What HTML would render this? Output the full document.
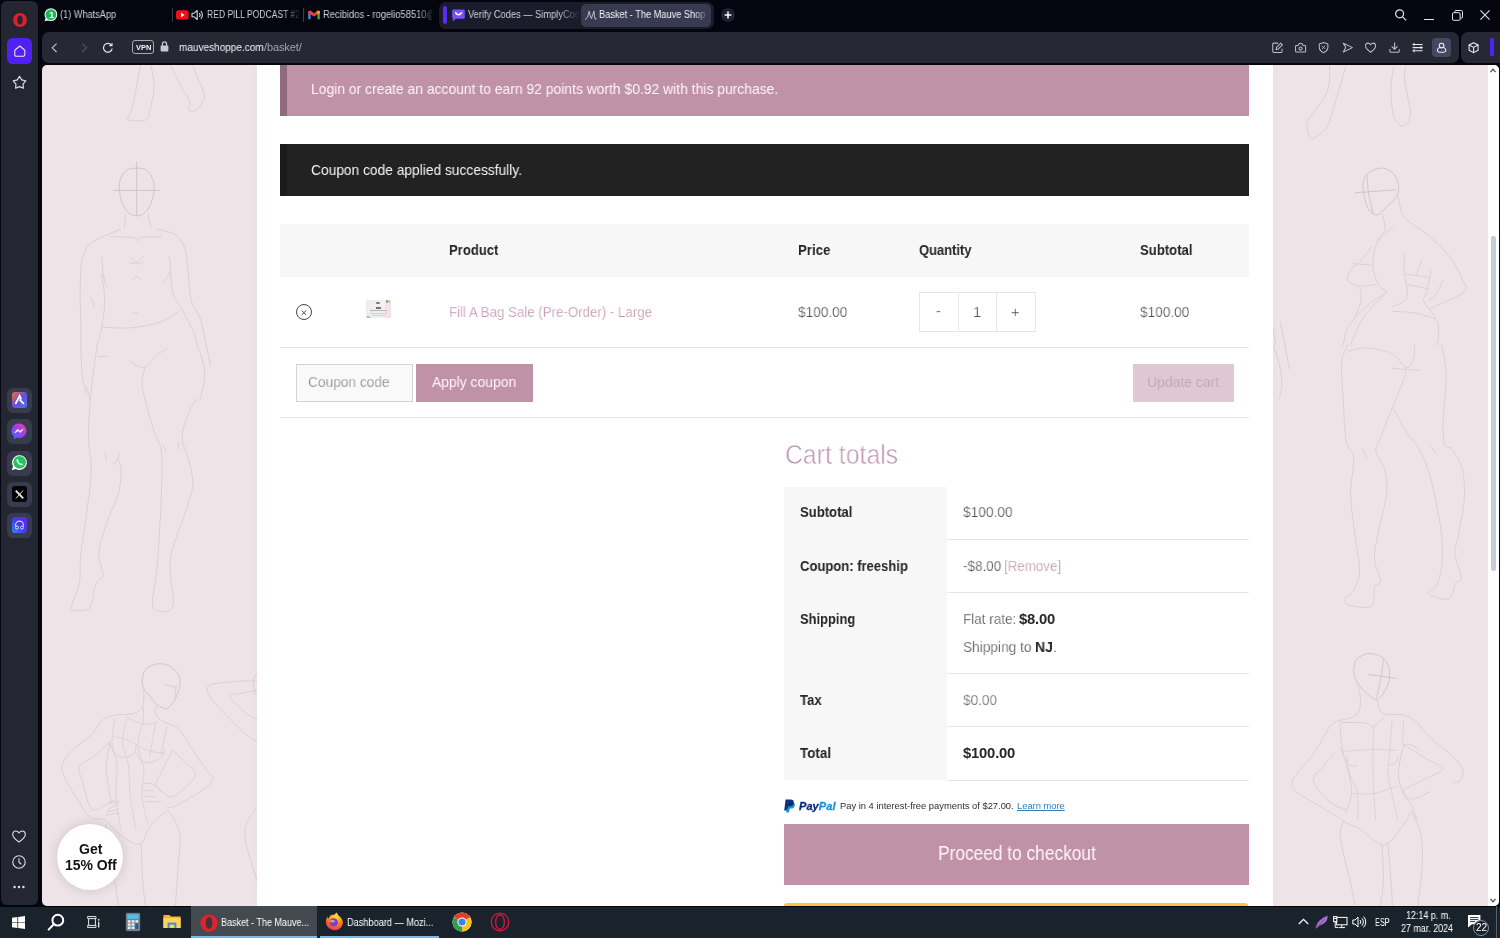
<!DOCTYPE html>
<html lang="en">
<head>
<meta charset="utf-8">
<title>Basket - The Mauve Shoppe</title>
<style>
*{box-sizing:border-box;margin:0;padding:0}
html,body{width:1500px;height:938px;overflow:hidden;background:#04050f}
body{position:relative;font-family:"Liberation Sans",Arial,sans-serif;font-size:14px;color:#555}
.a{position:absolute}
.t{position:absolute;white-space:nowrap;will-change:transform}
svg{position:absolute;overflow:visible}
#sidebar{left:1px;top:1px;width:37px;height:904px;background:#242632;border-radius:6px}
#home{left:6px;top:37.3px;width:25px;height:25.6px;border-radius:5.5px;background:#4f21f3}
.tile{left:6px;width:25px;height:25px;border-radius:6px;background:#383b4d}
.sep{top:8px;width:1px;height:14px;background:#3a3c4a}
#group{left:439px;top:2px;width:275px;height:27px;border-radius:7px;background:#1a1c2b}
#active{left:581px;top:4px;width:130px;height:23px;border-radius:5px;background:#383b50}
#addr{left:42px;top:32px;width:1417px;height:31px;border-radius:7px;background:#262834}
#addr2{left:1461px;top:32px;width:45px;height:31px;border-radius:7px;background:#262834}
#page{left:42px;top:64.7px;width:1457px;height:841.2px;background:#eee4e7;border-radius:5px;overflow:hidden}
.hr{height:1px;background:#e8e8e8}
#taskbar{left:0;top:906.9px;width:1500px;height:32px;background:#1a232b}
</style>
</head>
<body>
<div id="tabs" class="a" style="left:0;top:0;width:1500px;height:32px">
<svg style="left:44px;top:8.4px" width="14" height="14" viewBox="0 0 14 14"><path d="M0.6 13.2 L1.8 9.6 L4.6 12.2 Z" fill="#fff"/><circle cx="6.9" cy="6.6" r="6.4" fill="#f2fff6"/><circle cx="6.9" cy="6.6" r="5.4" fill="#1fb457"/></svg>
<div class="t" style="left:48.6px;top:8.0px;font-size:9.5px;line-height:13px;font-weight:700;color:#f4fff7;">1</div>
<div class="t" style="left:60.4px;top:8.0px;font-size:10px;line-height:14px;transform:scaleX(0.9192);transform-origin:0 50%;color:#d0d1da;">(1) WhatsApp</div>
<div class="a sep" style="left:172px"></div>
<svg style="left:176px;top:10px" width="13" height="10" viewBox="0 0 13 10"><rect x="0" y="0.3" width="12.6" height="9.2" rx="2.6" fill="#f1101a"/><path d="M5 2.6 L8.6 4.9 L5 7.2 Z" fill="#fff"/></svg>
<svg style="left:191px;top:9px" width="13" height="12" viewBox="0 0 13 12" fill="none" stroke="#d9d9e0" stroke-width="1.1"><path d="M1 4.2 H3.2 L6.2 1.5 V10.5 L3.2 7.8 H1 Z" stroke-linejoin="round"/><path d="M8.3 4 A3 3 0 0 1 8.3 8"/><path d="M9.8 2.2 A5.3 5.3 0 0 1 9.8 9.8"/></svg>
<div class="t" style="left:207.4px;top:8.0px;font-size:10px;line-height:14px;transform:scaleX(0.8546);transform-origin:0 50%;color:#d0d1da;">RED PILL PODCAST #2</div>
<div class="a" style="left:284px;top:6px;width:17px;height:19px;background:linear-gradient(90deg,#04050f00,#04050f)"></div>
<div class="a sep" style="left:303px"></div>
<svg style="left:308px;top:10px" width="12" height="10" viewBox="0 0 12 10"><path d="M0.2 1.2 V9.2 H2.6 V4 Z" fill="#4285f4"/><path d="M11.8 1.2 V9.2 H9.4 V4 Z" fill="#34a853"/><path d="M0.2 1.2 L2.6 0.6 L6 3.4 L9.4 0.6 L11.8 1.2 V3 L6 6.6 L0.2 3 Z" fill="#ea4335"/><path d="M9.4 0.6 L11.8 1.2 V3.2 L9.4 4.2Z" fill="#fbbc04"/></svg>
<div class="t" style="left:323.0px;top:8.0px;font-size:10px;line-height:14px;transform:scaleX(0.9356);transform-origin:0 50%;color:#d0d1da;">Recibidos - rogelio58510@</div>
<div class="a" style="left:416px;top:6px;width:21px;height:19px;background:linear-gradient(90deg,#04050f00,#04050f)"></div>
<div class="a" style="left:432px;top:6px;width:7px;height:19px;background:#04050f"></div>
<div id="group" class="a"></div>
<div class="a" style="left:443px;top:6px;width:4px;height:18px;border-radius:2px;background:#5a2cf6"></div>
<svg style="left:452px;top:9px" width="13" height="13" viewBox="0 0 13 13"><path d="M1.4 0.4 H11.6 A1.2 1.2 0 0 1 12.8 1.6 V8.6 A1.2 1.2 0 0 1 11.6 9.8 H3.8 L0.8 12.4 V9.2 Q0.2 9 0.2 8.4 V1.6 A1.2 1.2 0 0 1 1.4 0.4 Z" fill="#7a4ff7"/><path d="M3.6 3.8 Q6.5 7.6 9.6 3.8" fill="none" stroke="#fff" stroke-width="1.5" stroke-linecap="round"/></svg>
<div class="t" style="left:468.0px;top:8.0px;font-size:10px;line-height:14px;transform:scaleX(0.9286);transform-origin:0 50%;color:#d0d1da;">Verify Codes — SimplyCod</div>
<div class="a" style="left:558px;top:6px;width:22px;height:19px;background:linear-gradient(90deg,#1a1c2b00,#1a1c2b)"></div>
<div id="active" class="a"></div>
<svg style="left:585px;top:10px" width="12" height="11" viewBox="0 0 12 11" fill="none" stroke="#c9cad6" stroke-width="0.9" stroke-linecap="round"><path d="M0.6 9.6 Q3 8.4 4.2 1.2 Q4.8 5.6 6.4 8.6 Q7.6 5 9 1 Q9.2 6.6 10.2 9.4 L11.4 8.6"/></svg>
<div class="t" style="left:599.4px;top:8.0px;font-size:10px;line-height:14px;transform:scaleX(0.9223);transform-origin:0 50%;color:#f3f3f7;">Basket - The Mauve Shopp</div>
<div class="a" style="left:694px;top:6px;width:15px;height:19px;background:linear-gradient(90deg,#383b5000,#383b50)"></div>
<div class="a" style="left:709px;top:4px;width:5px;height:23px;background:#1a1c2b;border-radius:0 7px 7px 0"></div>
<div class="a" style="left:706px;top:4px;width:5px;height:23px;background:#383b50;border-radius:0 5px 5px 0"></div>
<div class="a" style="left:721px;top:8px;width:14px;height:14px;border-radius:7px;background:#1f2130"></div>
<svg style="left:724px;top:11px" width="8" height="8" viewBox="0 0 8 8" stroke="#fff" stroke-width="1.5"><path d="M4 0.6 V7.4 M0.6 4 H7.4"/></svg>
<svg style="left:1394px;top:8px" width="14" height="14" viewBox="0 0 14 14" fill="none" stroke="#e3e3e8" stroke-width="1.2"><circle cx="5.6" cy="5.8" r="4"/><path d="M8.6 8.8 L12.2 12.4"/></svg>
<div class="a" style="left:1424px;top:19px;width:10px;height:1px;background:#e3e3e8"></div>
<svg style="left:1452px;top:10px" width="11" height="11" viewBox="0 0 11 11" fill="none" stroke="#e3e3e8" stroke-width="1"><rect x="0.5" y="2.7" width="7.6" height="7.6" rx="1.2"/><path d="M2.8 2.5 V1.6 Q2.8 0.5 3.9 0.5 H9.4 Q10.5 0.5 10.5 1.6 V7 Q10.5 8.1 9.4 8.1 H8.3"/></svg>
<svg style="left:1480px;top:10px" width="10" height="10" viewBox="0 0 10 10" fill="none" stroke="#e3e3e8" stroke-width="1.1"><path d="M0.4 0.4 L9.6 9.6 M9.6 0.4 L0.4 9.6"/></svg>
</div>
<div id="addr" class="a"></div><div id="addr2" class="a"></div>
<svg style="left:51px;top:43px" width="7" height="10" viewBox="0 0 7 10" fill="none" stroke="#c3c4cc" stroke-width="1.1"><path d="M5.6 0.6 L1.2 4.8 L5.6 9"/></svg>
<svg style="left:81px;top:43px" width="7" height="10" viewBox="0 0 7 10" fill="none" stroke="#565866" stroke-width="1.1"><path d="M1.2 0.6 L5.6 4.8 L1.2 9"/></svg>
<svg style="left:102px;top:42px" width="12" height="12" viewBox="0 0 12 12" fill="none" stroke="#e6e6ea" stroke-width="1.15"><path d="M9.6 3.4 A4.4 4.4 0 1 0 10.2 6.6"/><path d="M7.4 3.6 H10 V1" stroke-width="1.1"/></svg>
<div class="a" style="left:132px;top:40px;width:22px;height:14px;border:1px solid #a9aab3;border-radius:3px"></div>
<div class="t" style="left:135.6px;top:43.0px;font-size:7.5px;line-height:10px;font-weight:700;transform:scaleX(0.9726);transform-origin:0 50%;color:#f4f4f6;">VPN</div>
<svg style="left:160px;top:41px" width="9" height="11" viewBox="0 0 9 11"><path d="M2.4 5 V3 A2.1 2.1 0 0 1 6.6 3 V5" fill="none" stroke="#c9cad1" stroke-width="1.2"/><rect x="0.6" y="4.6" width="7.8" height="6" rx="1" fill="#c9cad1"/></svg>
<div class="t" style="left:179.2px;top:40.0px;font-size:11px;line-height:15px;transform:scaleX(0.9101);transform-origin:0 50%;color:#f5f5f8;">mauveshoppe.com</div>
<div class="t" style="left:263.8px;top:40.0px;font-size:11px;line-height:15px;letter-spacing:-0.12px;color:#a3a4b0;">/basket/</div>
<svg style="left:1271.7px;top:41.6px" width="11.2" height="11.2" viewBox="0 0 12 12" fill="none" stroke="#bcbdc7" stroke-width="1.1" stroke-linecap="round" stroke-linejoin="round"><path d="M6.2 1.2 H2 Q0.8 1.2 0.8 2.4 V10 Q0.8 11.2 2 11.2 H9.6 Q10.8 11.2 10.8 10 V7.6"/><path d="M4.4 8.2 L5 5.6 L9.4 1.2 L11.2 3 L6.8 7.4 Z"/></svg>
<svg style="left:1295.2px;top:41.6px" width="11.2" height="11.2" viewBox="0 0 12 12" fill="none" stroke="#bcbdc7" stroke-width="1.1" stroke-linecap="round" stroke-linejoin="round"><path d="M1.6 3.8 H3.2 L4.6 1.6 H7.4 L8.8 3.8 H10.4 Q11.4 3.8 11.4 4.8 V9.8 Q11.4 10.8 10.4 10.8 H1.6 Q0.6 10.8 0.6 9.8 V4.8 Q0.6 3.8 1.6 3.8 Z"/><circle cx="6" cy="7" r="1.7"/></svg>
<svg style="left:1318.4px;top:41.6px" width="11.2" height="11.2" viewBox="0 0 12 12" fill="none" stroke="#bcbdc7" stroke-width="1.1" stroke-linecap="round" stroke-linejoin="round"><path d="M6 0.6 L10.6 2.2 V6 Q10.6 9.4 6 11.6 Q1.4 9.4 1.4 6 V2.2 Z"/><path d="M4.6 4.4 L7.4 7.2 M7.4 4.4 L4.6 7.2" stroke-width="0.9"/></svg>
<svg style="left:1342.1px;top:41.6px" width="11.2" height="11.2" viewBox="0 0 12 12" fill="none" stroke="#bcbdc7" stroke-width="1.1" stroke-linecap="round" stroke-linejoin="round"><path d="M1.4 1.4 L11.2 6 L1.4 10.8 L4 6 Z"/></svg>
<svg style="left:1365.3px;top:41.6px" width="11.2" height="11.2" viewBox="0 0 12 12" fill="none" stroke="#bcbdc7" stroke-width="1.1" stroke-linecap="round" stroke-linejoin="round"><path d="M6 11 Q0.4 7 0.6 3.8 Q0.8 1.2 3.2 1.2 Q5 1.2 6 3 Q7 1.2 8.8 1.2 Q11.2 1.2 11.4 3.8 Q11.6 7 6 11 Z"/></svg>
<svg style="left:1388.8px;top:41.6px" width="11.2" height="11.2" viewBox="0 0 12 12" fill="none" stroke="#bcbdc7" stroke-width="1.1" stroke-linecap="round" stroke-linejoin="round"><path d="M6 0.8 V7.6 M3.2 5 L6 7.8 L8.8 5" stroke-width="1.2"/><path d="M1 8 V10 Q1 11 2 11 H10 Q11 11 11 10 V8" stroke-width="1.2"/></svg>
<svg style="left:1412.4px;top:41.6px" width="11.2" height="11.2" viewBox="0 0 12 12" fill="none" stroke="#e9e9ee" stroke-width="1.1" stroke-linecap="round" stroke-linejoin="round"><path d="M1 2.6 H11 M1 6 H11 M1 9.4 H11" stroke-width="1.15"/><path d="M2.6 1.4 L1 2.6 L2.6 3.8 M9.4 4.8 L11 6 L9.4 7.2 M2.6 8.2 L1 9.4 L2.6 10.6" stroke-width="0.9"/></svg>
<div class="a" style="left:1432px;top:38px;width:19px;height:19px;border-radius:4px;background:#444862"></div>
<svg style="left:1435.7px;top:41.6px" width="11.2" height="11.2" viewBox="0 0 12 12" fill="none" stroke="#f0f0f4" stroke-width="1.1" stroke-linecap="round" stroke-linejoin="round"><circle cx="6" cy="3.8" r="2.5"/><path d="M3.4 6 Q1.4 7.4 1.4 9 Q1.4 11 6 11 Q10.6 11 10.6 9 Q10.6 7.4 8.6 6"/></svg>
<svg style="left:1468.4px;top:41.8px" width="11.2" height="11.2" viewBox="0 0 12 12" fill="none" stroke="#f0f0f4" stroke-width="1.1" stroke-linecap="round" stroke-linejoin="round"><path d="M6 0.8 L10.8 3.2 V8.8 L6 11.4 L1.2 8.8 V3.2 Z"/><path d="M1.2 3.2 L6 5.8 L10.8 3.2 M6 5.8 V11.4"/></svg>
<div class="a" style="left:1490px;top:38px;width:4px;height:18px;border-radius:1px;background:#4f21f3"></div>
<div id="sidebar" class="a"><div id="home" class="a"></div>
<div class="a tile" style="top:387px"></div>
<div class="a tile" style="top:418px"></div>
<div class="a tile" style="top:449.5px"></div>
<div class="a tile" style="top:481px"></div>
<div class="a tile" style="top:512px"></div>
</div>
<svg style="left:13px;top:12.6px" width="14" height="14" viewBox="0 0 14 14"><ellipse cx="7" cy="7" rx="6.9" ry="6.9" fill="#dc202d"/><ellipse cx="7" cy="7" rx="2.7" ry="4.5" fill="#232837"/></svg>
<svg style="left:13.6px;top:45px" width="11.6" height="12" viewBox="0 0 12 12" fill="none" stroke="#efe4ff" stroke-width="1.1" stroke-linejoin="round"><path d="M0.8 5.2 L6 0.8 L11.2 5.2 V9.8 Q11.2 11.4 9.6 11.4 H2.4 Q0.8 11.4 0.8 9.8 Z"/></svg>
<svg style="left:12px;top:75px" width="15" height="15" viewBox="0 0 15 15" fill="none" stroke="#dedee6" stroke-width="1.2" stroke-linejoin="round"><path d="M7.50 1.30 L9.67 4.91 L13.78 5.86 L11.02 9.04 L11.38 13.24 L7.50 11.60 L3.62 13.24 L3.98 9.04 L1.22 5.86 L5.33 4.91 Z"/></svg>
<svg style="left:12px;top:392px" width="15" height="16" viewBox="0 0 15 16"><defs><linearGradient id="ga" x1="0" y1="0" x2="1" y2="1"><stop offset="0" stop-color="#f3742c"/><stop offset=".5" stop-color="#6a4be0"/><stop offset="1" stop-color="#3f7be8"/></linearGradient></defs><rect x="0" y="0" width="15" height="16" rx="3" fill="url(#ga)"/><path d="M3.8 11.4 L7.6 4 L9 6.6 M8 8.2 L11.4 11.4" fill="none" stroke="#fff" stroke-width="1.8" stroke-linecap="round"/></svg>
<svg style="left:11px;top:423px" width="16" height="17" viewBox="0 0 16 17"><defs><linearGradient id="gm" x1="0" y1="1" x2="1" y2="0"><stop offset="0" stop-color="#2f7bf6"/><stop offset=".55" stop-color="#a33af0"/><stop offset="1" stop-color="#f0506e"/></linearGradient></defs><path d="M8 0.6 A7.4 7.2 0 0 1 8 15 Q6.8 15 5.8 14.6 L3 16.2 V13.2 A7.2 7.2 0 0 1 8 0.6 Z" fill="url(#gm)"/><path d="M3.8 9.8 L6.6 6.2 L8.8 8.2 L12.2 6 L9.4 9.6 L7.2 7.8 Z" fill="#fff" stroke="#fff" stroke-width="0.6" stroke-linejoin="round"/></svg>
<svg style="left:11px;top:454px" width="17" height="17" viewBox="0 0 17 17"><path d="M0.8 16.2 L2 12.2 A7.4 7.4 0 1 1 4.8 15 Z" fill="#fff"/><circle cx="8.6" cy="8.2" r="6.3" fill="#25c35f"/><path d="M6.2 4.8 Q5.2 5.6 5.6 7.2 Q6.6 10.2 9.8 11.2 Q11.2 11.6 12 10.4 L10.4 9.2 L9.6 9.8 Q7.8 9 7.2 7.2 L7.8 6.4 Z" fill="#fff"/></svg>
<div class="a" style="left:12px;top:486px;width:15px;height:16px;border-radius:3px;background:#050505"></div>
<svg style="left:15px;top:490px" width="9" height="9" viewBox="0 0 9 9" fill="none" stroke="#e8e8e8" stroke-width="1.3"><path d="M0.8 0.6 L8.2 8.4" stroke-width="1.9"/><path d="M8 0.6 L1 8.4" stroke-width="0.9"/></svg>
<svg style="left:12px;top:517px" width="15" height="16" viewBox="0 0 15 16"><defs><linearGradient id="gh" x1="0" y1="1" x2="1" y2="0"><stop offset="0" stop-color="#2c8cf0"/><stop offset=".5" stop-color="#4a35ee"/><stop offset="1" stop-color="#5a2cf0"/></linearGradient></defs><rect width="15" height="16" rx="3" fill="url(#gh)"/><path d="M3.6 9.6 V8 A3.9 3.9 0 0 1 11.4 8 V9.6" fill="none" stroke="#cfd6ff" stroke-width="1.1"/><circle cx="5" cy="10.6" r="1.5" fill="none" stroke="#cfd6ff" stroke-width="1"/><circle cx="10" cy="10.6" r="1.5" fill="none" stroke="#cfd6ff" stroke-width="1"/></svg>
<svg style="left:12px;top:830px" width="14" height="13" viewBox="0 0 14 13" fill="none" stroke="#dcdce3" stroke-width="1.1" stroke-linejoin="round"><path d="M7 12 Q0.4 7.6 0.7 4 Q1 1 3.8 1 Q5.8 1 7 3 Q8.2 1 10.2 1 Q13 1 13.3 4 Q13.6 7.6 7 12 Z"/></svg>
<svg style="left:12px;top:855px" width="14" height="14" viewBox="0 0 14 14" fill="none" stroke="#dcdce3" stroke-width="1.1" stroke-linecap="round"><circle cx="7" cy="7" r="6.2"/><path d="M7 3.6 V7.2 L9 9"/></svg>
<svg style="left:13px;top:885px" width="12" height="4" viewBox="0 0 12 4" fill="#e6e6ea"><circle cx="1.6" cy="2" r="1.2"/><circle cx="6" cy="2" r="1.2"/><circle cx="10.4" cy="2" r="1.2"/></svg>
<div id="page" class="a"><div class="a" style="left:-42px;top:-64.7px;width:1500px;height:938px">
<svg style="left:0;top:0" width="1500" height="938" viewBox="0 0 1500 938" fill="none" stroke-linecap="round" stroke-linejoin="round"><path stroke="#dacdd2" stroke-width="0.9" d="M140.5 65.0C139.8 69.0 137.6 81.4 136.1 88.9C134.6 96.4 132.8 105.3 131.6 109.8C130.3 114.3 129.0 114.0 128.6 115.8C128.2 117.5 126.2 119.6 129.2 120.2C132.2 120.9 143.0 121.4 146.5 119.6C150.0 117.9 148.8 114.9 150.1 109.8C151.3 104.7 153.6 94.9 154.0 88.9C154.4 82.9 153.0 77.9 152.5 74.0C152.0 70.0 151.2 66.5 151.0 65.0M170.4 65.0C172.4 69.0 179.1 82.9 182.3 88.9C185.6 94.9 188.8 97.3 189.8 100.8C190.8 104.3 187.3 108.2 188.3 109.8C189.3 111.4 193.3 111.9 195.8 110.4C198.3 108.9 201.8 103.7 203.2 100.8C204.6 98.0 205.1 97.3 204.1 93.4C203.1 89.4 199.2 81.7 197.3 76.9C195.4 72.2 193.5 67.0 192.8 65.0M125.6 214.3 L124.1 227.7M148.0 214.3 L151.0 227.7M121.1 229.2C118.4 230.3 109.9 233.3 104.7 235.8C99.5 238.3 93.4 240.8 89.8 244.2C86.2 247.5 84.7 251.6 83.2 256.1C81.7 260.6 81.3 264.1 80.8 271.0C80.3 278.0 80.2 289.4 80.2 297.9C80.2 306.4 80.7 313.9 80.8 321.8C80.9 329.7 80.8 341.2 80.8 345.1M157.0 229.2C160.2 230.2 171.6 231.7 176.4 235.2C181.1 238.7 183.3 243.7 185.3 250.1C187.3 256.6 187.3 265.6 188.3 274.0C189.3 282.5 189.3 293.4 191.3 300.9C193.3 308.4 197.8 311.4 200.3 318.8C202.7 326.2 205.2 340.7 206.2 345.1M110.7 236.7C114.4 236.8 128.7 236.9 133.1 237.6C137.5 238.2 135.7 240.6 137.0 240.6C138.2 240.6 136.5 238.2 140.5 237.6C144.6 236.9 158.0 236.8 161.4 236.7M101.7 256.1C102.0 259.1 102.5 269.0 103.2 274.0C104.0 279.0 105.7 284.0 106.2 286.0M168.9 256.1C169.2 258.6 171.4 266.6 170.4 271.0C169.4 275.5 164.2 281.0 162.9 283.0M130.1 256.1C131.2 257.1 134.7 262.1 137.0 262.1C139.2 262.1 142.4 257.1 143.5 256.1M130.1 262.7C131.2 262.9 134.7 264.0 137.0 263.9C139.2 263.8 142.4 262.4 143.5 262.1M131.6 280.6C132.5 279.9 135.2 276.4 137.0 276.4C138.7 276.4 141.2 279.9 142.0 280.6M101.7 274.0C102.2 278.5 104.7 291.9 104.7 300.9C104.7 309.8 103.0 320.4 101.7 327.8C100.5 335.1 98.0 342.2 97.2 345.1M91.3 297.9 L94.3 306.9M133.1 313.4 L137.6 312.8M101.7 327.2C106.7 327.3 121.6 328.7 131.6 327.8C141.5 326.9 153.5 324.5 161.4 321.8C169.4 319.1 176.4 313.1 179.4 311.3M170.4 271.0C170.9 275.0 171.4 288.4 173.4 294.9C175.4 301.4 178.9 303.4 182.3 309.8C185.8 316.3 191.8 327.9 194.3 333.7C196.8 339.6 196.8 343.2 197.3 345.1M80.8 345.0C81.1 350.0 81.3 366.4 82.3 374.9C83.3 383.3 86.0 392.3 86.8 395.8M86.8 386.8 L89.8 398.7M97.2 345.0C96.2 352.5 92.8 374.9 91.3 389.8C89.8 404.7 88.3 421.1 88.3 434.6C88.3 448.0 91.5 457.5 91.3 470.4C91.0 483.3 88.5 498.3 86.8 512.2C85.0 526.1 82.1 542.1 80.8 554.0C79.6 566.0 80.8 575.4 79.3 583.9C77.8 592.3 72.9 600.4 71.9 604.8C70.9 609.2 70.4 609.7 73.4 610.2C76.3 610.7 86.0 612.1 89.8 607.8C93.5 603.4 93.5 589.4 95.7 583.9C98.0 578.4 102.7 579.9 103.2 574.9C103.7 569.9 98.2 562.5 98.7 554.0C99.2 545.6 103.0 534.1 106.2 524.2C109.4 514.2 115.7 503.3 118.1 494.3C120.6 485.3 121.1 476.4 121.1 470.4C121.1 464.4 118.6 460.5 118.1 458.5M105.3 452.5 L106.2 460.0M113.7 464.4 L120.2 454.0M97.2 356.9 L107.7 356.3M130.1 361.4C132.3 362.4 138.8 368.6 143.5 367.4C148.3 366.2 154.5 357.2 158.5 354.0C162.4 350.7 165.9 349.0 167.4 348.0M145.0 367.4C144.5 370.1 141.8 377.6 142.0 383.8C142.3 390.0 144.5 396.8 146.5 404.7C148.5 412.7 151.5 423.6 154.0 431.6C156.5 439.6 160.2 442.0 161.4 452.5C162.7 462.9 161.7 482.4 161.4 494.3C161.2 506.2 160.7 511.7 159.9 524.2C159.2 536.6 158.2 556.0 157.0 568.9C155.7 581.9 152.5 594.8 152.5 601.8C152.5 608.8 154.2 609.3 157.0 610.8C159.7 612.2 166.2 612.2 168.9 610.8C171.6 609.3 173.1 608.3 173.4 601.8C173.6 595.3 170.6 580.4 170.4 571.9C170.1 563.5 169.4 561.0 171.9 551.0C174.4 541.1 181.8 523.2 185.3 512.2C188.8 501.3 192.0 493.3 192.8 485.3C193.5 477.4 191.5 472.4 189.8 464.4C188.1 456.5 182.6 446.0 182.3 437.6C182.1 429.1 185.8 420.1 188.3 413.7C190.8 407.2 195.8 401.2 197.3 398.7M197.3 345.0C198.3 348.0 202.0 357.4 203.2 362.9C204.5 368.4 205.2 371.9 204.7 377.8C204.2 383.8 201.0 395.3 200.3 398.7M206.2 345.0 L210.7 365.9M162.9 445.0 L165.9 451.0M177.9 442.0 L178.8 449.5M164.9 684.6 L176.4 687.4M176.4 685.5 L174.5 699.9M143.7 688.4C143.7 690.3 144.1 696.7 143.7 699.9C143.4 703.1 143.4 705.4 141.8 707.6C140.2 709.8 138.6 712.1 134.1 713.4C129.7 714.6 120.4 714.0 115.0 715.3C109.5 716.6 105.4 717.8 101.5 721.0C97.7 724.2 96.7 729.7 91.9 734.5C87.1 739.3 77.7 744.7 72.7 749.8C67.8 754.9 63.4 760.4 62.2 765.2C60.9 770.0 62.6 773.2 65.0 778.6C67.4 784.1 72.4 791.4 76.6 797.8C80.7 804.2 85.2 813.5 90.0 817.0C94.8 820.5 102.8 818.6 105.4 818.9M110.2 742.1C107.1 744.7 97.0 753.3 91.9 757.5C86.8 761.7 80.9 762.6 79.4 767.1C78.0 771.6 81.2 777.3 83.3 784.4C85.4 791.4 87.9 806.1 91.9 809.3C95.9 812.5 103.4 805.2 107.3 803.6C111.1 802.0 113.7 800.4 115.0 799.7M107.3 803.6C109.2 803.3 118.8 800.4 118.8 801.7C118.8 802.9 107.3 810.0 107.3 811.3C107.3 812.5 116.9 809.7 118.8 809.3M105.4 815.1 L118.8 813.2M157.2 705.7C156.9 706.6 154.9 709.2 155.3 711.4C155.6 713.7 156.9 717.0 159.1 719.1C161.3 721.2 165.2 722.0 168.7 723.9C172.2 725.8 176.1 726.0 180.2 730.6C184.4 735.3 189.2 745.0 193.7 751.7C198.1 758.5 203.9 766.5 207.1 770.9C210.3 775.4 213.2 775.7 212.9 778.6C212.5 781.5 211.3 783.7 205.2 788.2C199.1 792.7 182.5 802.3 176.4 805.5C170.3 808.7 170.0 807.1 168.7 807.4M172.5 749.8C174.5 751.7 180.2 757.2 184.1 761.3C187.9 765.5 195.6 770.3 195.6 774.8C195.6 779.3 187.9 784.5 184.1 788.2C180.2 791.9 175.7 795.9 172.5 796.9C169.3 797.8 167.7 796.1 164.9 794.0C162.0 791.9 156.9 786.0 155.3 784.4M141.8 784.4C143.4 784.2 148.2 782.1 151.4 783.4C154.6 784.7 159.4 790.6 161.0 792.1M142.8 790.1 L153.3 791.1M143.7 795.9 L155.3 796.9M145.7 801.7 L161.0 801.7M110.2 742.1C109.5 746.0 106.6 758.1 106.3 765.2C106.0 772.2 107.4 778.3 108.2 784.4C109.0 790.5 110.6 798.8 111.1 801.7M172.5 749.8C171.3 752.4 167.7 759.4 164.9 765.2C162.0 770.9 156.9 781.2 155.3 784.4M110.2 744.1C111.0 745.7 112.6 751.4 115.0 753.7C117.4 755.9 121.3 757.5 124.5 757.5C127.7 757.5 132.2 755.6 134.1 753.7C136.1 751.7 135.7 747.3 136.1 746.0M137.0 753.7C137.8 754.9 139.4 759.9 141.8 761.3C144.2 762.8 148.2 762.9 151.4 762.3C154.6 761.7 158.8 759.6 161.0 757.5C163.3 755.4 164.2 751.1 164.9 749.8M126.5 717.2C129.0 718.3 136.7 723.0 141.8 723.9C146.9 724.9 154.6 723.1 157.2 723.0M143.7 707.6 L142.8 724.9M107.2 821.5C109.6 823.9 116.0 831.9 121.4 835.7C126.8 839.5 135.1 845.6 139.8 844.2C144.6 842.8 145.3 832.9 149.8 827.2C154.3 821.5 164.0 813.0 166.8 810.2M105.8 824.3C107.0 831.4 110.8 853.3 112.9 866.9C115.0 880.5 117.6 899.5 118.6 906.0M141.3 844.2C141.5 850.3 142.0 870.8 142.7 881.1C143.4 891.4 145.0 901.9 145.5 906.0M168.2 810.2C170.1 813.9 177.9 823.4 179.5 832.9C181.2 842.3 178.8 854.7 178.1 866.9C177.4 879.1 175.8 899.5 175.3 906.0M257.0 680.7C253.2 680.9 242.0 680.9 234.0 681.7C226.0 682.5 212.9 682.8 209.0 685.5C205.2 688.2 208.1 693.0 210.9 698.0C213.8 703.0 220.9 709.5 226.3 715.3C231.7 721.0 238.5 728.1 243.6 732.5C248.7 737.0 254.8 740.5 257.0 742.1M257.0 690.3C254.5 690.8 246.1 692.2 241.7 693.2C237.2 694.2 230.5 693.7 230.1 696.1C229.8 698.5 236.5 704.4 239.7 707.6C242.9 710.8 246.5 713.4 249.3 715.3C252.2 717.2 255.7 718.5 257.0 719.1M257.0 673.0C256.4 674.3 253.5 677.2 253.2 680.7C252.9 684.2 254.8 691.9 255.1 694.2M257.0 807.3C255.2 810.2 248.0 818.2 246.2 824.3C244.4 830.5 244.4 834.7 246.2 844.2C248.0 853.7 255.2 874.9 257.0 881.1M1329.7 65.0C1329.5 69.0 1330.2 81.9 1328.2 88.9C1326.2 95.9 1321.3 101.3 1317.8 106.8C1314.3 112.3 1308.6 116.5 1307.3 121.7C1306.1 127.0 1308.1 136.2 1310.3 138.2C1312.6 140.1 1317.8 135.9 1320.8 133.7C1323.8 131.4 1325.8 130.2 1328.2 124.7C1330.7 119.2 1332.7 110.8 1335.7 100.8C1338.7 90.9 1344.4 71.0 1346.2 65.0M1393.9 65.0C1393.4 69.0 1391.2 81.4 1390.9 88.9C1390.7 96.4 1391.7 104.6 1392.4 109.8C1393.2 115.0 1393.7 117.5 1395.4 120.2C1397.2 123.0 1400.4 127.0 1402.9 126.2C1405.4 125.5 1409.6 121.0 1410.4 115.8C1411.1 110.5 1408.4 101.3 1407.4 94.9C1406.4 88.4 1404.6 81.9 1404.4 76.9C1404.1 72.0 1405.6 67.0 1405.9 65.0M1382.0 214.3C1382.5 216.8 1386.0 224.7 1385.0 229.2C1384.0 233.7 1377.5 239.2 1376.0 241.2M1398.4 196.4C1399.4 199.9 1399.4 210.8 1404.4 217.3C1409.4 223.8 1420.8 228.7 1428.3 235.2C1435.7 241.7 1443.7 249.1 1449.2 256.1C1454.6 263.1 1458.6 271.0 1461.1 277.0C1463.6 283.0 1469.3 286.7 1464.1 291.9C1458.9 297.2 1435.5 305.6 1429.8 308.4M1393.9 226.2C1391.7 228.2 1383.7 234.2 1380.5 238.2C1377.3 242.2 1375.8 245.2 1374.5 250.1C1373.3 255.1 1372.3 262.1 1373.0 268.0C1373.8 274.0 1376.8 282.0 1379.0 286.0C1381.2 289.9 1387.5 289.4 1386.5 291.9C1385.5 294.4 1377.5 297.4 1373.0 300.9C1368.6 304.4 1363.8 308.4 1359.6 312.8C1355.4 317.3 1350.4 322.4 1347.6 327.8C1344.9 333.1 1343.9 342.2 1343.2 345.1M1371.5 247.1C1369.5 249.6 1362.8 258.6 1359.6 262.1C1356.4 265.6 1354.1 265.1 1352.1 268.0C1350.1 271.0 1346.4 277.0 1347.6 280.0C1348.9 283.0 1354.9 285.2 1359.6 286.0C1364.3 286.7 1373.3 284.7 1376.0 284.5M1352.1 263.6 L1371.5 265.1M1359.6 286.0C1359.8 288.4 1361.8 295.9 1361.1 300.9C1360.3 305.9 1356.1 313.3 1355.1 315.8M1404.4 253.1C1404.4 256.6 1403.9 267.5 1404.4 274.0C1404.9 280.5 1407.4 287.5 1407.4 291.9C1407.4 296.4 1406.9 298.4 1404.4 300.9C1401.9 303.4 1394.4 305.9 1392.4 306.9M1405.9 274.0 L1429.8 277.6M1407.4 284.5 L1428.3 288.9M1422.3 259.1 L1416.3 274.0M1431.3 271.0C1430.5 274.5 1428.0 287.0 1426.8 291.9C1425.5 296.9 1422.5 296.9 1423.8 300.9C1425.0 304.9 1431.8 311.3 1434.2 315.8C1436.7 320.3 1438.2 322.9 1438.7 327.8C1439.2 332.6 1437.5 342.2 1437.2 345.1M1443.2 280.0C1442.0 282.5 1438.2 291.4 1435.7 294.9C1433.2 298.4 1429.5 299.9 1428.3 300.9M1392.4 311.3C1395.9 311.6 1406.1 311.6 1413.3 312.8C1420.6 314.1 1432.0 317.8 1435.7 318.8M1386.5 291.9C1382.5 296.4 1368.6 309.9 1362.6 318.8C1356.6 327.7 1352.6 340.7 1350.6 345.1M1273.0 327.8 L1276.0 345.1M1280.5 321.8 L1284.9 345.1M1347.6 345.0C1346.7 348.0 1342.4 354.0 1341.7 362.9C1340.9 371.9 1342.4 385.8 1343.2 398.7C1343.9 411.7 1344.4 430.6 1346.2 440.6C1347.9 450.5 1352.9 449.5 1353.6 458.5C1354.4 467.4 1350.4 481.4 1350.6 494.3C1350.9 507.2 1353.6 523.2 1355.1 536.1C1356.6 549.0 1360.1 562.5 1359.6 571.9C1359.1 581.4 1354.6 588.4 1352.1 592.8C1349.6 597.3 1345.4 596.8 1344.7 598.8C1343.9 600.8 1343.2 603.5 1347.6 604.8C1352.1 606.0 1367.1 609.3 1371.5 606.3C1376.0 603.3 1373.0 591.1 1374.5 586.9C1376.0 582.6 1380.5 585.4 1380.5 580.9C1380.5 576.4 1375.0 567.5 1374.5 560.0C1374.0 552.5 1375.5 547.1 1377.5 536.1C1379.5 525.2 1385.2 505.2 1386.5 494.3C1387.7 483.3 1386.7 477.6 1385.0 470.4C1383.2 463.2 1376.8 456.5 1376.0 451.0C1375.3 445.5 1377.8 444.8 1380.5 437.6C1383.2 430.3 1388.5 417.7 1392.4 407.7C1396.4 397.8 1402.1 384.6 1404.4 377.8C1406.6 371.1 1405.6 369.1 1405.9 367.4M1347.6 351.0C1351.1 350.5 1361.1 347.5 1368.6 348.0C1376.0 348.5 1386.2 350.7 1392.4 354.0C1398.7 357.2 1402.4 366.4 1405.9 367.4C1409.4 368.4 1411.8 363.7 1413.3 359.9C1414.8 356.2 1414.6 347.5 1414.8 345.0M1392.4 368.3 L1419.3 370.4M1393.9 409.2C1395.7 412.4 1400.2 421.9 1404.4 428.6C1408.6 435.3 1415.3 442.5 1419.3 449.5C1423.3 456.5 1425.5 462.0 1428.3 470.4C1431.0 478.9 1433.5 489.3 1435.7 500.3C1438.0 511.2 1440.7 525.2 1441.7 536.1C1442.7 547.1 1442.7 557.5 1441.7 566.0C1440.7 574.4 1438.0 582.6 1435.7 586.9C1433.5 591.1 1429.0 589.8 1428.3 591.3C1427.5 592.8 1427.8 594.6 1431.3 595.8C1434.7 597.1 1445.2 600.8 1449.2 598.8C1453.2 596.8 1453.2 587.4 1455.1 583.9C1457.1 580.4 1461.1 582.9 1461.1 577.9C1461.1 572.9 1455.6 561.0 1455.1 554.0C1454.6 547.1 1456.6 545.1 1458.1 536.1C1459.6 527.1 1463.4 511.2 1464.1 500.3C1464.8 489.3 1464.6 478.9 1462.6 470.4C1460.6 462.0 1455.1 453.7 1452.2 449.5C1449.2 445.3 1446.2 450.0 1444.7 445.0C1443.2 440.1 1443.0 431.3 1443.2 419.6C1443.4 408.0 1446.4 387.3 1446.2 374.9C1445.9 362.4 1442.5 350.0 1441.7 345.0M1362.6 449.5 L1367.1 458.5M1431.3 446.5 L1435.7 454.0M1273.0 345.0C1274.0 348.0 1277.5 356.4 1279.0 362.9C1280.5 369.4 1282.0 377.8 1282.0 383.8C1282.0 389.8 1279.5 396.3 1279.0 398.7M1284.9 345.0 L1289.4 368.9M1357.5 683.2C1357.9 685.6 1360.0 693.3 1360.3 697.6C1360.7 701.9 1360.5 705.9 1359.4 709.1C1358.3 712.3 1357.5 714.7 1353.6 716.8C1349.8 718.9 1340.5 719.7 1336.4 721.6C1332.2 723.5 1331.2 724.9 1328.7 728.3C1326.1 731.7 1324.2 736.6 1321.0 741.7C1317.8 746.9 1313.3 753.9 1309.5 759.0C1305.6 764.1 1300.8 768.6 1298.0 772.5C1295.1 776.3 1292.8 779.2 1292.2 782.1C1291.6 784.9 1290.9 786.5 1294.1 789.7C1297.3 792.9 1305.3 797.4 1311.4 801.3C1317.5 805.1 1325.8 809.9 1330.6 812.8C1335.4 815.7 1338.6 817.6 1340.2 818.5M1377.6 699.5C1377.8 700.8 1377.5 704.8 1378.6 707.2C1379.7 709.6 1380.2 712.6 1384.3 713.9C1388.5 715.2 1398.4 713.8 1403.5 714.9C1408.7 716.0 1411.5 717.8 1415.1 720.6C1418.6 723.5 1420.5 728.0 1424.7 732.1C1428.8 736.3 1434.9 741.1 1440.0 745.6C1445.1 750.1 1451.5 754.9 1455.4 759.0C1459.2 763.2 1462.3 767.0 1463.1 770.5C1463.9 774.1 1461.8 778.1 1460.2 780.1C1458.6 782.2 1454.6 782.5 1453.5 783.0M1334.4 753.3C1332.5 755.5 1326.4 762.4 1322.9 766.7C1319.4 771.0 1313.6 774.7 1313.3 779.2C1313.0 783.7 1317.5 789.3 1321.0 793.6C1324.5 797.9 1330.3 802.5 1334.4 805.1C1338.6 807.7 1344.0 808.3 1346.0 808.9M1403.5 744.6C1404.8 744.6 1408.7 743.7 1411.2 744.6C1413.8 745.6 1417.6 749.4 1418.9 750.4M1403.5 744.6C1407.4 747.0 1420.0 755.0 1426.6 759.0C1433.1 763.0 1442.9 765.4 1442.9 768.6C1442.9 771.8 1432.5 775.0 1426.6 778.2C1420.7 781.4 1411.2 785.6 1407.4 787.8C1403.5 790.1 1402.9 789.7 1403.5 791.7C1404.2 793.6 1406.7 799.3 1411.2 799.3C1415.7 799.3 1427.2 792.9 1430.4 791.7M1340.2 747.5C1341.2 750.1 1344.4 757.7 1346.0 762.9C1347.6 768.0 1348.8 773.1 1349.8 778.2C1350.8 783.3 1352.3 787.8 1351.7 793.6C1351.1 799.3 1346.9 809.6 1346.0 812.8M1403.5 744.6C1402.9 747.7 1400.5 757.3 1399.7 762.9C1398.9 768.5 1398.1 773.1 1398.7 778.2C1399.4 783.3 1401.5 789.1 1403.5 793.6C1405.6 798.1 1409.0 800.7 1411.2 805.1C1413.5 809.5 1416.0 817.6 1417.0 820.1M1346.9 755.2C1347.2 756.8 1347.1 763.0 1348.8 764.8C1350.6 766.5 1356.0 765.6 1357.5 765.7M1388.2 764.8C1389.5 764.5 1394.1 764.5 1395.9 762.9C1397.6 761.3 1398.3 756.5 1398.7 755.2M1340.2 722.5C1344.4 722.6 1359.7 722.3 1365.1 722.9C1370.6 723.6 1370.3 726.8 1372.8 726.4C1375.4 726.0 1378.6 722.2 1380.5 720.6C1382.4 719.0 1383.7 717.4 1384.3 716.8M1343.2 821.6C1345.9 822.8 1353.9 825.6 1359.6 829.0C1365.3 832.5 1373.0 840.0 1377.5 842.5C1382.0 845.0 1383.0 845.7 1386.5 844.0C1390.0 842.2 1394.2 837.5 1398.4 832.0C1402.6 826.6 1409.6 814.6 1411.8 811.1M1343.2 820.1C1342.7 822.6 1339.9 828.5 1340.2 835.0C1340.4 841.5 1342.9 850.9 1344.7 858.9C1346.4 866.9 1348.9 874.9 1350.6 882.8C1352.4 890.7 1354.4 902.2 1355.1 906.1M1382.0 844.0C1382.2 849.9 1383.7 869.5 1383.5 879.8C1383.2 890.2 1381.0 901.7 1380.5 906.1M1388.0 844.0C1388.5 849.9 1390.2 869.5 1390.9 879.8C1391.7 890.2 1392.2 901.7 1392.4 906.1M1411.8 811.1C1413.3 815.1 1419.1 826.1 1420.8 835.0C1422.5 844.0 1422.8 853.0 1422.3 864.9C1421.8 876.7 1418.6 899.2 1417.8 906.1"/><path stroke="#d0c3c8" stroke-width="0.95" d="M136.7 168.0C138.3 168.4 143.8 168.1 146.5 170.1C149.2 172.1 151.8 176.3 153.1 180.0C154.3 183.6 154.5 187.7 154.0 191.9C153.5 196.1 151.8 201.7 150.1 205.3C148.4 209.0 145.8 212.0 143.5 213.7C141.3 215.4 138.9 215.8 136.7 215.8C134.4 215.8 132.0 215.4 129.8 213.7C127.5 212.0 124.9 209.0 123.2 205.3C121.5 201.7 120.1 196.1 119.6 191.9C119.1 187.7 119.0 183.6 120.2 180.0C121.4 176.3 124.1 172.1 126.8 170.1C129.5 168.1 135.0 168.4 136.7 168.0M136.7 162.0 L136.7 215.8M113.7 190.4 L159.9 190.4M141.8 680.7C142.5 678.8 143.1 672.0 145.7 669.2C148.2 666.4 153.0 664.3 157.2 663.8C161.3 663.3 166.9 664.1 170.6 666.3C174.3 668.5 177.8 673.2 179.3 676.9C180.7 680.6 180.1 684.6 179.3 688.4C178.5 692.2 176.5 696.6 174.5 699.9C172.4 703.3 169.7 707.8 166.8 708.6C163.9 709.4 160.1 706.8 157.2 704.7C154.3 702.6 151.7 698.8 149.5 696.1C147.3 693.4 145.0 691.0 143.7 688.4C142.5 685.8 142.1 682.0 141.8 680.7M1362.6 184.4C1363.3 182.7 1364.1 176.7 1367.1 174.0C1370.0 171.3 1376.3 168.3 1380.5 168.0C1384.7 167.8 1389.5 169.8 1392.4 172.5C1395.4 175.2 1397.7 180.5 1398.4 184.4C1399.2 188.4 1398.7 192.9 1396.9 196.4C1395.2 199.9 1390.9 202.4 1388.0 205.3C1385.0 208.3 1381.7 213.1 1379.0 214.3C1376.3 215.5 1373.8 214.8 1371.5 212.8C1369.3 210.8 1367.1 207.1 1365.6 202.4C1364.1 197.6 1363.1 187.4 1362.6 184.4M1367.1 175.5C1367.3 178.5 1367.6 187.2 1368.6 193.4C1369.5 199.6 1372.3 209.6 1373.0 212.8M1355.1 192.8 L1395.4 189.8M1353.6 672.6C1353.9 670.7 1353.9 664.1 1355.5 661.1C1357.1 658.2 1360.3 656.2 1363.2 655.0C1366.1 653.8 1369.5 653.3 1372.8 653.8C1376.2 654.4 1380.7 655.7 1383.4 658.2C1386.1 660.7 1388.2 665.1 1389.1 668.8C1390.1 672.5 1389.9 676.5 1389.1 680.3C1388.3 684.2 1386.3 688.6 1384.3 691.8C1382.4 695.0 1379.9 698.7 1377.6 699.5C1375.4 700.3 1373.3 698.2 1370.9 696.6C1368.5 695.0 1365.6 692.5 1363.2 689.9C1360.8 687.4 1358.1 684.2 1356.5 681.3C1354.9 678.4 1354.1 674.1 1353.6 672.6M1383.4 658.2C1383.1 661.0 1382.6 668.0 1381.5 674.6C1380.3 681.1 1377.5 693.8 1376.7 697.6M1369.0 674.6 L1395.9 678.4"/><path stroke="#d8cbd0" stroke-width="0.9" stroke-dasharray="1.6 1.4" d="M115.0 719.1C114.5 723.0 111.8 734.5 112.1 742.1C112.4 749.8 116.2 756.2 116.9 765.2C117.5 774.1 115.3 785.1 115.9 795.9C116.6 806.7 119.9 824.4 120.7 830.1M126.5 719.1C125.8 723.0 122.3 734.5 122.6 742.1C122.9 749.8 127.1 756.2 128.4 765.2C129.7 774.1 129.0 785.1 130.3 795.9C131.6 806.7 135.1 824.4 136.1 830.1M141.8 724.9C141.2 728.4 137.7 738.6 138.0 746.0C138.3 753.3 143.1 760.7 143.7 769.0C144.4 777.3 141.2 786.9 141.8 795.9C142.5 804.9 146.6 818.3 147.6 822.8M155.3 724.9C154.6 728.4 152.4 740.5 151.4 746.0C150.5 751.4 149.8 755.6 149.5 757.5M166.8 726.8 L161.0 753.7M113.0 736.4C115.6 737.0 122.9 738.0 128.4 740.2C133.8 742.5 139.6 747.6 145.7 749.8C151.7 752.1 161.7 753.0 164.9 753.7M1340.2 724.5C1340.5 728.3 1340.5 739.2 1342.1 747.5C1343.7 755.8 1347.2 766.7 1349.8 774.4C1352.3 782.1 1356.2 786.0 1357.5 793.6C1358.7 801.2 1357.5 815.7 1357.5 820.1M1373.8 726.4C1373.6 731.2 1372.8 744.0 1372.8 755.2C1372.8 766.4 1373.3 782.8 1373.8 793.6C1374.3 804.4 1375.4 815.7 1375.7 820.1M1392.0 720.6C1391.7 725.1 1390.7 738.5 1390.1 747.5C1389.5 756.5 1387.9 766.7 1388.2 774.4C1388.5 782.1 1390.4 786.0 1392.0 793.6C1393.6 801.2 1396.8 815.7 1397.8 820.1M1403.5 720.6 L1402.6 743.7M1344.0 751.3C1348.8 751.0 1363.9 749.6 1372.8 749.4C1381.8 749.3 1393.6 750.2 1397.8 750.4M1353.6 793.6C1356.8 793.6 1365.5 794.9 1372.8 793.6C1380.2 792.3 1393.6 787.2 1397.8 785.9"/></svg>
<div class="a" style="left:257px;top:65px;width:1016px;height:841px;background:#fff;box-shadow:0 0 7px rgba(60,40,50,.045)"></div>
<div class="a" style="left:1488px;top:65px;width:12px;height:841px;background:#fff"></div>
<div class="a" style="left:1491px;top:236px;width:5px;height:335px;background:#c6cdd8;border-radius:2px"></div>
<svg style="left:1490.3px;top:68px" width="6" height="5" viewBox="0 0 6 5" fill="none" stroke="#4a4a4a" stroke-width="1.3"><path d="M0.5 4.2 L3 1.2 L5.5 4.2"/></svg>
<svg style="left:1490.3px;top:898.2px" width="6" height="5" viewBox="0 0 6 5" fill="none" stroke="#4a4a4a" stroke-width="1.3"><path d="M0.5 0.8 L3 3.8 L5.5 0.8"/></svg>
<div class="a" style="left:280px;top:65px;width:969px;height:51px;background:#c092a7;border-left:7px solid #8f6c7d"></div>
<div class="t" style="left:311.4px;top:79.0px;font-size:14.8px;line-height:21px;transform:scaleX(0.9388);transform-origin:0 50%;color:#fff5f9;">Login or create an account to earn 92 points worth $0.92 with this purchase.</div>
<div class="a" style="left:280px;top:144px;width:969px;height:52px;background:#222;border-left:7px solid #1b1b1b"></div>
<div class="t" style="left:311.4px;top:160.0px;font-size:14.8px;line-height:21px;transform:scaleX(0.9305);transform-origin:0 50%;color:#f6f6f6;">Coupon code applied successfully.</div>
<div class="a" style="left:280px;top:224px;width:969px;height:53px;background:#f7f7f7"></div>
<div class="t" style="left:449.4px;top:240.0px;font-size:14.8px;line-height:21px;font-weight:700;transform:scaleX(0.8836);transform-origin:0 50%;color:#262626;">Product</div>
<div class="t" style="left:797.9px;top:240.0px;font-size:14.8px;line-height:21px;font-weight:700;transform:scaleX(0.8950);transform-origin:0 50%;color:#262626;">Price</div>
<div class="t" style="left:919.0px;top:240.0px;font-size:14.8px;line-height:21px;font-weight:700;transform:scaleX(0.8748);transform-origin:0 50%;color:#262626;">Quantity</div>
<div class="t" style="left:1139.7px;top:240.0px;font-size:14.8px;line-height:21px;font-weight:700;transform:scaleX(0.8870);transform-origin:0 50%;color:#262626;">Subtotal</div>
<svg style="left:296px;top:304px" width="16" height="16" viewBox="0 0 16 16" fill="none" stroke="#444" stroke-width="1"><circle cx="8" cy="8" r="7.5"/><path d="M5.7 6.5 L10.1 10.9 M10.1 6.5 L5.7 10.9" stroke-width="1" stroke="#4a4a4a"/></svg>
<div class="a" style="left:366px;top:300px;width:24.5px;height:18px;background:linear-gradient(90deg,#ededed 0%,#f3f1f1 70%,#f6e1e7 82%,#f6dfe6 100%)"></div>
<div class="a" style="left:376px;top:302px;width:4px;height:2px;background:#555;border-radius:1px;opacity:.75"></div>
<div class="a" style="left:375.5px;top:306.5px;width:5px;height:2.5px;background:#4a4a4a;opacity:.75"></div>
<div class="a" style="left:369.5px;top:309.6px;width:17px;height:1px;background:#8d8588;opacity:.6"></div>
<div class="a" style="left:370px;top:313px;width:17px;height:1px;background:#b9aab0;opacity:.5"></div>
<div class="a" style="left:372px;top:315px;width:13px;height:1px;background:#e3b3c2;opacity:.7"></div>
<div class="a" style="left:386px;top:300px;width:2px;height:2.5px;background:#4f9c84;opacity:.85;border-radius:1px"></div>
<div class="a" style="left:388px;top:300px;width:2px;height:2.5px;background:#f0b070;opacity:.85;border-radius:1px"></div>
<div class="a" style="left:366.5px;top:315.5px;width:2.5px;height:2.5px;background:#5fae94;opacity:.85;border-radius:1px"></div>
<div class="a" style="left:369px;top:316px;width:2px;height:2px;background:#f2c27a;opacity:.8;border-radius:1px"></div>
<div class="t" style="left:449.4px;top:302.0px;font-size:14.8px;line-height:21px;transform:scaleX(0.8976);transform-origin:0 50%;color:#bf8fa5;-webkit-text-stroke:0.25px #fff;">Fill A Bag Sale (Pre-Order) - Large</div>
<div class="t" style="left:797.9px;top:302.0px;font-size:14.8px;line-height:21px;transform:scaleX(0.9215);transform-origin:0 50%;color:#4c4c4c;-webkit-text-stroke:0.25px #fff;">$100.00</div>
<div class="a" style="left:919px;top:292px;width:117px;height:40px;border:1px solid #e8e8e8;background:#fff"></div>
<div class="a" style="left:958px;top:292px;width:1px;height:40px;background:#e8e8e8"></div>
<div class="a" style="left:996px;top:292px;width:1px;height:40px;background:#e8e8e8"></div>
<div class="t" style="left:935.6px;top:301.0px;font-size:14.8px;line-height:21px;color:#444;-webkit-text-stroke:0.25px #fff;">-</div>
<div class="t" style="left:973.2px;top:302.0px;font-size:14.8px;line-height:21px;color:#555;-webkit-text-stroke:0.25px #fff;">1</div>
<div class="t" style="left:1010.8px;top:302.0px;font-size:14.8px;line-height:21px;color:#444;-webkit-text-stroke:0.25px #fff;">+</div>
<div class="t" style="left:1139.7px;top:302.0px;font-size:14.8px;line-height:21px;transform:scaleX(0.9215);transform-origin:0 50%;color:#4c4c4c;-webkit-text-stroke:0.25px #fff;">$100.00</div>
<div class="a hr" style="left:280px;top:347px;width:969px;height:1px;"></div>
<div class="a" style="left:296px;top:364px;width:117px;height:38px;border:1px solid #d3d3d3;background:#f9f9f9"></div>
<div class="t" style="left:308.3px;top:372.0px;font-size:14.8px;line-height:21px;transform:scaleX(0.9269);transform-origin:0 50%;color:#858585;-webkit-text-stroke:0.25px #f9f9f9;">Coupon code</div>
<div class="a" style="left:416px;top:364px;width:117px;height:38px;background:#c092a7"></div>
<div class="t" style="left:432.4px;top:372.0px;font-size:14.8px;line-height:21px;transform:scaleX(0.9390);transform-origin:0 50%;color:#fff5f9;">Apply coupon</div>
<div class="a" style="left:1133px;top:364px;width:101px;height:38px;background:#dfc8d3"></div>
<div class="t" style="left:1147.2px;top:372.0px;font-size:14.8px;line-height:21px;transform:scaleX(0.9425);transform-origin:0 50%;color:#b9a1ad;-webkit-text-stroke:0.25px #dfc8d3;">Update cart</div>
<div class="a hr" style="left:280px;top:417px;width:969px;height:1px;"></div>
<h2 class="t" style="left:784.6px;top:435.0px;font-size:28.2px;line-height:39px;transform:scaleX(0.8811);transform-origin:0 50%;color:#c096aa;font-weight:400;-webkit-text-stroke:0.6px #fff;">Cart totals</h2>
<div class="a" style="left:784px;top:487px;width:163px;height:293px;background:#f7f7f7"></div>
<div class="a hr" style="left:947px;top:539px;width:302px;height:1px;"></div>
<div class="a hr" style="left:947px;top:592px;width:302px;height:1px;"></div>
<div class="a hr" style="left:947px;top:673px;width:302px;height:1px;"></div>
<div class="a hr" style="left:947px;top:726px;width:302px;height:1px;"></div>
<div class="a hr" style="left:947px;top:780px;width:302px;height:1px;"></div>
<div class="t" style="left:799.9px;top:502.0px;font-size:14.8px;line-height:21px;font-weight:700;transform:scaleX(0.8853);transform-origin:0 50%;color:#262626;">Subtotal</div>
<div class="t" style="left:962.5px;top:502.0px;font-size:14.8px;line-height:21px;transform:scaleX(0.9271);transform-origin:0 50%;color:#4c4c4c;-webkit-text-stroke:0.25px #fff;">$100.00</div>
<div class="t" style="left:799.9px;top:556.0px;font-size:14.8px;line-height:21px;font-weight:700;transform:scaleX(0.8809);transform-origin:0 50%;color:#262626;">Coupon: freeship</div>
<div class="t" style="left:962.5px;top:556.0px;font-size:14.8px;line-height:21px;transform:scaleX(0.9102);transform-origin:0 50%;color:#4c4c4c;-webkit-text-stroke:0.25px #fff;">-$8.00</div>
<div class="t" style="left:1004.4px;top:556.0px;font-size:14.8px;line-height:21px;transform:scaleX(0.9017);transform-origin:0 50%;color:#bf8fa5;-webkit-text-stroke:0.25px #fff;">[Remove]</div>
<div class="t" style="left:799.9px;top:609.0px;font-size:14.8px;line-height:21px;font-weight:700;transform:scaleX(0.8737);transform-origin:0 50%;color:#262626;">Shipping</div>
<div class="t" style="left:962.5px;top:609.0px;font-size:14.8px;line-height:21px;transform:scaleX(0.9128);transform-origin:0 50%;color:#4c4c4c;-webkit-text-stroke:0.25px #fff;">Flat rate:</div>
<div class="t" style="left:1019.4px;top:609.0px;font-size:14.8px;line-height:21px;font-weight:700;letter-spacing:-0.17px;color:#262626;">$8.00</div>
<div class="t" style="left:962.5px;top:637.0px;font-size:14.8px;line-height:21px;transform:scaleX(0.9251);transform-origin:0 50%;color:#4c4c4c;-webkit-text-stroke:0.25px #fff;">Shipping to</div>
<div class="t" style="left:1035.0px;top:637.0px;font-size:14.8px;line-height:21px;font-weight:700;transform:scaleX(0.9407);transform-origin:0 50%;color:#262626;">NJ</div>
<div class="t" style="left:1052.6px;top:637.0px;font-size:14.8px;line-height:21px;color:#4c4c4c;-webkit-text-stroke:0.25px #fff;">.</div>
<div class="t" style="left:799.9px;top:690.0px;font-size:14.8px;line-height:21px;font-weight:700;transform:scaleX(0.8850);transform-origin:0 50%;color:#262626;">Tax</div>
<div class="t" style="left:962.5px;top:690.0px;font-size:14.8px;line-height:21px;transform:scaleX(0.9208);transform-origin:0 50%;color:#666;-webkit-text-stroke:0.25px #fff;">$0.00</div>
<div class="t" style="left:799.9px;top:743.0px;font-size:14.8px;line-height:21px;font-weight:700;transform:scaleX(0.9051);transform-origin:0 50%;color:#262626;">Total</div>
<div class="t" style="left:962.5px;top:743.0px;font-size:14.8px;line-height:21px;font-weight:700;letter-spacing:-0.19px;color:#262626;">$100.00</div>
<svg style="left:784px;top:799px" width="12" height="14" viewBox="0 0 12 14"><path d="M1.6 0.4 H6.6 Q10 0.4 9.8 3.6 Q9.4 7.2 5.8 7.2 H4.2 L3.4 11.6 H0.2 Z" fill="#0a2f80"/><path d="M3.6 3.2 H8 Q11.2 3.2 10.8 6.2 Q10.2 9.6 6.8 9.6 H5.6 L5 13.4 H2.2 Z" fill="#1590d8"/><path d="M3.6 3.2 H8 Q9.4 3.2 9.8 3.8 Q9.4 7.2 5.8 7.2 H4.2 L3.7 9.8 H3 Z" fill="#0a2366"/></svg>
<div class="t" style="left:799.3px;top:799.0px;font-size:11px;line-height:15px;font-weight:700;font-style:italic;letter-spacing:0.08px;color:#0b2d7e;-webkit-text-stroke-width:.3px;">Pay<span style="color:#1792db">Pal</span></div>
<div class="t" style="left:840.4px;top:799.0px;font-size:9.4px;line-height:13px;letter-spacing:-0.01px;color:#2e2e2e;">Pay in 4 interest-free payments of $27.00.</div>
<div class="t" style="left:1017.2px;top:799.0px;font-size:9.4px;line-height:13px;letter-spacing:-0.02px;color:#2f7fbf;text-decoration:underline;">Learn more</div>
<div class="a" style="left:784px;top:824px;width:465px;height:61px;background:#c092a7"></div>
<div class="t" style="left:937.6px;top:840.0px;font-size:19.4px;line-height:27px;transform:scaleX(0.8926);transform-origin:0 50%;color:#fff5f9;">Proceed to checkout</div>
<div class="a" style="left:784px;top:903px;width:464px;height:12px;background:#ffc439;border-radius:3px"></div>
<div class="a" style="left:57px;top:824px;width:66px;height:66px;background:#fff;border-radius:50%;box-shadow:0 0 10px 2px rgba(120,90,100,.18)"></div>
<div class="t" style="left:78.6px;top:839.0px;font-size:14px;line-height:20px;font-weight:700;letter-spacing:0.09px;color:#111;">Get</div>
<div class="t" style="left:64.6px;top:855.0px;font-size:14px;line-height:20px;font-weight:700;letter-spacing:-0.07px;color:#111;">15% Off</div>
</div></div>
<div id="taskbar" class="a"></div>
<div class="a" style="left:191px;top:906px;width:126px;height:32px;background:#434a50"></div>
<div class="a" style="left:191px;top:936px;width:126px;height:2px;background:#7ab9ea"></div>
<div class="a" style="left:320px;top:936px;width:119px;height:2px;background:#7ab9ea"></div>
<svg style="left:12px;top:916px" width="13" height="13" viewBox="0 0 14 14" fill="#fff"><path d="M0 2 L5.8 1.2 V6.6 H0 Z M6.6 1.1 L14 0 V6.6 H6.6 Z M0 7.4 H5.8 V12.8 L0 12 Z M6.6 7.4 H14 V14 L6.6 12.9 Z"/></svg>
<svg style="left:47px;top:913px" width="18" height="18" viewBox="0 0 18 18" fill="none" stroke="#fff" stroke-width="2"><circle cx="10.8" cy="7.2" r="5.4"/><path d="M6.8 11.2 L1.6 16.6" stroke-linecap="round"/></svg>
<svg style="left:86px;top:915px" width="15" height="14" viewBox="0 0 15 14" fill="none" stroke="#e8e8e8" stroke-width="1"><rect x="2.6" y="3.6" width="6.8" height="6.8"/><path d="M1.2 1.6 H10.2 M1.2 12.4 H10.2"/><path d="M12.7 6.8 V12.6" stroke-width="1.3"/><circle cx="12.7" cy="4.8" r="0.9" fill="#e8e8e8" stroke="none"/><path d="M1.6 2 V4 M1.6 10 V12 M10 2 V4 M10 10 V12" stroke-width="0.8"/></svg>
<svg style="left:126px;top:913px" width="14" height="18" viewBox="0 0 14 18"><rect x="0.3" y="0.3" width="13.4" height="17.4" rx="0.8" fill="#75808b" stroke="#8f9aa6" stroke-width="0.6"/><rect x="1.4" y="1.4" width="11.2" height="4.4" fill="#4fc3ef"/><g fill="#e6ebef"><rect x="1.8" y="7.2" width="2.8" height="2.4"/><rect x="5.6" y="7.2" width="2.8" height="2.4"/><rect x="9.4" y="7.2" width="2.8" height="2.4"/><rect x="1.8" y="10.4" width="2.8" height="2.4"/><rect x="5.6" y="10.4" width="2.8" height="2.4"/><rect x="1.8" y="13.6" width="2.8" height="2.4"/><rect x="5.6" y="13.6" width="2.8" height="2.4"/></g><rect x="9.4" y="10.4" width="2.8" height="5.6" fill="#1d5fae"/></svg>
<svg style="left:163px;top:914px" width="18" height="15" viewBox="0 0 18 15"><path d="M0.4 1 H6.4 L8 2.6 H17.6 V14 H0.4 Z" fill="#f3b62a"/><rect x="0.4" y="4" width="17.2" height="10" fill="#fbd45a"/><rect x="4.6" y="8.6" width="8.8" height="5.4" fill="#3f8fd2"/><rect x="6.6" y="10.6" width="4.8" height="3.4" fill="#fbd45a"/></svg>
<svg style="left:199.5px;top:913.5px" width="18" height="18" viewBox="0 0 18 18"><ellipse cx="9" cy="9" rx="8.6" ry="8.8" fill="#e0212e"/><ellipse cx="9" cy="9" rx="3.4" ry="6" fill="#40353a"/></svg>
<div class="t" style="left:220.6px;top:916.0px;font-size:10px;line-height:14px;transform:scaleX(0.9013);transform-origin:0 50%;color:#fff;">Basket - The Mauve...</div>
<svg style="left:325px;top:912px" width="19" height="19" viewBox="0 0 19 19"><defs><radialGradient id="ff" cx=".6" cy=".2" r=".95"><stop offset="0" stop-color="#ffe43d"/><stop offset=".45" stop-color="#ff8a16"/><stop offset="1" stop-color="#e31b5d"/></radialGradient></defs><path d="M9.6 2.6 Q10.6 0.8 12 0.4 Q12.4 2.6 14.4 4.2 Q18.6 7.6 17.8 12 A8.6 8.4 0 0 1 1 11.2 Q0.4 7.4 2.6 4.6 Q2.8 6 3.6 6.6 Q4.4 3.6 7 2.6 Q7.6 3.2 9.6 2.6 Z" fill="url(#ff)"/><circle cx="8.8" cy="10.4" r="4.2" fill="#7b3fd0"/><path d="M4.6 9.6 Q7.4 11.4 10.2 9.4 Q9 7.6 6.4 8 Q5 8.4 4.6 9.6 Z" fill="#ffb11f" opacity=".85"/></svg>
<div class="t" style="left:346.8px;top:916.0px;font-size:10px;line-height:14px;transform:scaleX(0.9198);transform-origin:0 50%;color:#fff;">Dashboard — Mozi...</div>
<svg style="left:452px;top:912px" width="20" height="20" viewBox="0 0 20 20"><circle cx="10" cy="10" r="9.6" fill="#fff"/><path d="M10 10 L1.7 5.2 A9.6 9.6 0 0 1 18.3 5.2 Z" fill="#e33e2b"/><path d="M10 10 L18.3 5.2 A9.6 9.6 0 0 1 10 19.6 Z" fill="#f6c21c"/><path d="M10 10 L10 19.6 A9.6 9.6 0 0 1 1.7 5.2 Z" fill="#2ea04f"/><circle cx="10" cy="10" r="4.6" fill="#fff"/><circle cx="10" cy="10" r="3.6" fill="#3f7fe6"/></svg>
<svg style="left:490px;top:912px" width="20" height="20" viewBox="0 0 20 20" fill="none" stroke="#c2183f" stroke-width="1.5"><circle cx="10" cy="10" r="8.8"/><ellipse cx="10" cy="10" rx="4.4" ry="7.2"/></svg>
<svg style="left:1298px;top:918px" width="11" height="7" viewBox="0 0 11 7" fill="none" stroke="#fff" stroke-width="1.2"><path d="M0.8 6 L5.5 1.4 L10.2 6"/></svg>
<svg style="left:1315px;top:915px" width="14" height="14" viewBox="0 0 14 14"><path d="M0.6 13 Q2 5 12.6 0.6 Q13.4 7.6 4.6 10.6 L1.4 13.4 Z" fill="#a66fd0"/><path d="M1.2 12.8 L9.6 4.2" stroke="#6d3f9a" stroke-width="0.7"/></svg>
<svg style="left:1333px;top:916px" width="15" height="13" viewBox="0 0 15 13" fill="none" stroke="#fff" stroke-width="1"><rect x="3.6" y="1.4" width="10.4" height="7.4"/><path d="M8.8 8.8 V11.4 M5.6 11.6 H12"/><rect x="0.6" y="0.6" width="3.2" height="5" fill="#1a232b"/><path d="M0.6 2.4 H3.8 M2.2 5.6 V11.4 H5"/></svg>
<svg style="left:1352px;top:915px" width="15" height="14" viewBox="0 0 15 14" fill="none" stroke="#fff" stroke-width="1"><path d="M0.8 5 H3 L6 2 V12 L3 9 H0.8 Z" stroke-linejoin="round"/><path d="M8 5 A3 3 0 0 1 8 9 M9.8 3.2 A5.4 5.4 0 0 1 9.8 10.8 M11.6 1.6 A7.8 7.8 0 0 1 11.6 12.4"/></svg>
<div class="t" style="left:1375.2px;top:916.0px;font-size:10px;line-height:14px;transform:scaleX(0.7294);transform-origin:0 50%;color:#fff;">ESP</div>
<div class="t" style="left:1405.6px;top:909.0px;font-size:10px;line-height:14px;transform:scaleX(0.8914);transform-origin:0 50%;color:#fff;">12:14 p. m.</div>
<div class="t" style="left:1401.4px;top:922.0px;font-size:10px;line-height:14px;transform:scaleX(0.8908);transform-origin:0 50%;color:#fff;">27 mar. 2024</div>
<svg style="left:1467px;top:914px" width="16" height="15" viewBox="0 0 16 15"><path d="M1 1 H13.4 V10.2 H5 L1 13.6 Z" fill="#fff"/><path d="M3 3.6 H11.4 M3 5.6 H11.4 M3 7.6 H8" stroke="#1a232b" stroke-width="0.9"/></svg>
<div class="a" style="left:1473px;top:920px;width:16px;height:16px;border-radius:9px;background:#1a232b;border:1px solid #8a9097"></div>
<div class="t" style="left:1475.6px;top:921.0px;font-size:10px;line-height:14px;letter-spacing:-0.06px;color:#fff;">22</div>
<div class="a" style="left:1496px;top:906px;width:1px;height:32px;background:#5a6168"></div>
</body>
</html>
